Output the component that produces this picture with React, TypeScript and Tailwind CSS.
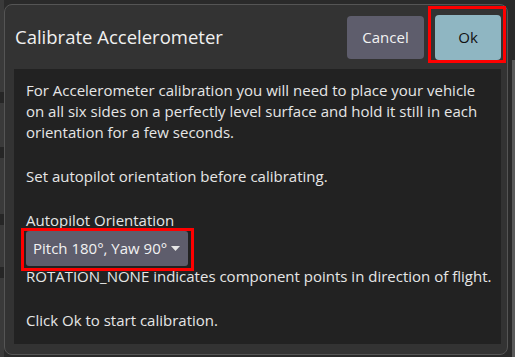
import React from "react";

const font = { fontFamily: '"Open Sans", "Noto Sans", sans-serif' };

function Line({ children }: { children: React.ReactNode }) {
  return <div className="h-[21px] whitespace-nowrap leading-[21px]">{children}</div>;
}

export default function App() {
  return (
    <div className="relative h-[357px] w-[515px] overflow-hidden bg-[#2a2a2a] text-[#e6e6e6]" style={font}>
      {/* page behind the dialog */}
      <div className="absolute left-0 top-0 h-full w-[4px] bg-[#3a3a3a]">
        <div className="mt-[92px] h-[11px] bg-[#262626]" />
        <div className="mt-[44px] h-[11px] bg-[#262626]" />
        <div className="mt-[56px] h-[11px] bg-[#262626]" />
        <div className="mt-[42px] h-[11px] bg-[#262626]" />
      </div>
      <div className="absolute right-0 top-[60px] h-[297px] w-[3px] bg-[#5a5a5a]" />

      {/* dialog */}
      <div className="absolute left-[4px] top-[4px] flex h-[351px] w-[504px] flex-col rounded-[8px] border border-[#555555] bg-[#333333]">
        <div className="flex h-[64px] items-center justify-between pl-[10px] pr-[6px]">
          <div className="text-[18.5px] text-[#f0f0f0]">Calibrate Accelerometer</div>
          <div className="flex items-center gap-[11px]">
            <button className="h-[43px] w-[77px] rounded-[4px] bg-[#5e5d6c] text-[15px] text-[#f2f2f2]">Cancel</button>
            <button className="h-[45px] w-[66px] rounded-[4px] bg-[#8fb6c2] text-[15px] text-[#111111]">Ok</button>
          </div>
        </div>
        <div className="ml-[9px] mr-[6px] flex h-[275px] flex-col bg-[#222222] px-[12px] pt-[11px] text-[15px] text-[#e6e6e6]">
          <Line>For Accelerometer calibration you will need to place your vehicle</Line>
          <Line>on all six sides on a perfectly level surface and hold it still in each</Line>
          <Line>orientation for a few seconds.</Line>
          <div className="h-[23px]" />
          <Line>Set autopilot orientation before calibrating.</Line>
          <div className="h-[23px]" />
          <Line>Autopilot Orientation</Line>
          <div className="flex h-[35px] w-[162px] items-center justify-between rounded-[3px] bg-[#5e5d6c] pl-[7px] pr-[8px] text-[#f2f2f2]">
            <span className="whitespace-nowrap">Pitch 180°, Yaw 90°</span>
            <svg width="9" height="5" viewBox="0 0 9 5">
              <path d="M0 0h9L4.5 5z" fill="#e6e6e6" />
            </svg>
          </div>
          <Line>ROTATION_NONE indicates component points in direction of flight.</Line>
          <div className="h-[23px]" />
          <Line>Click Ok to start calibration.</Line>
        </div>
      </div>

      {/* highlight boxes */}
      <div className="absolute left-[428px] top-[6px] h-[57px] w-[78px] border-[3px] border-[#ff0000]" />
      <div className="absolute left-[21px] top-[228px] h-[43px] w-[173px] border-[3px] border-[#ff0000]" />
    </div>
  );
}
